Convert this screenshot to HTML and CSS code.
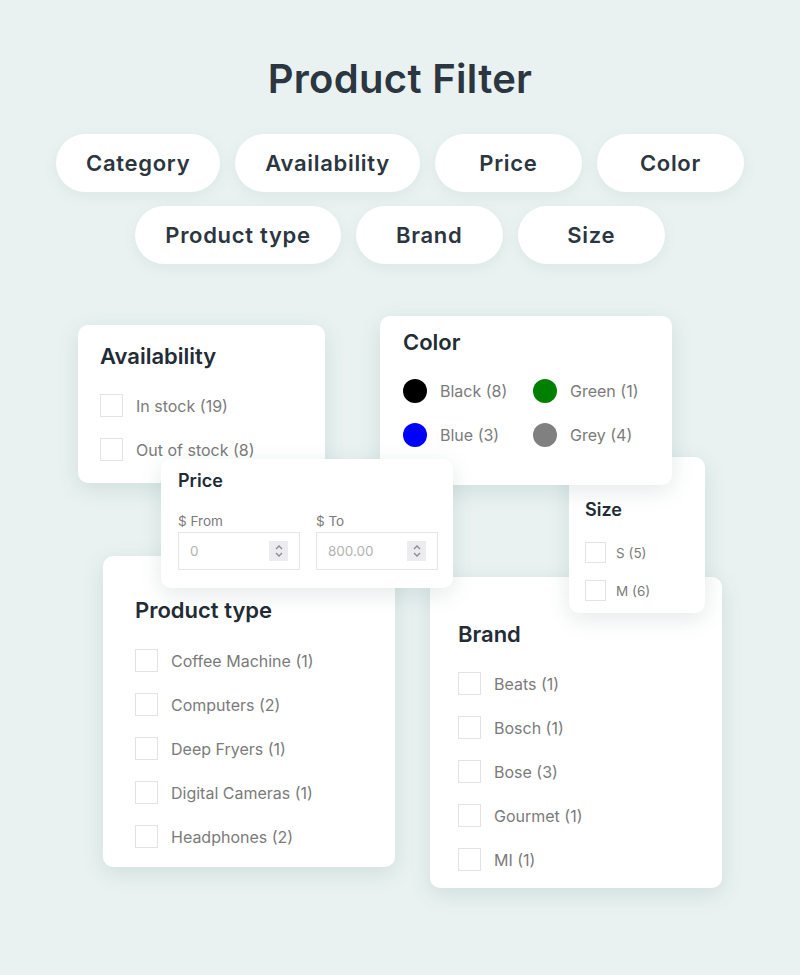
FILE: index.html
```html
<!DOCTYPE html>
<html lang="en">
<head>
    <meta charset="UTF-8">
    <meta name="viewport" content="width=device-width, initial-scale=1.0">
    <title>Product Filter</title>
    <link rel="stylesheet" href="styles.css">
</head>
<body>
    <header class="top">
        <h1>Product Filter</h1>
        <div class="pills">
            <div class="pill-row">
                <span class="pill">Category</span>
                <span class="pill">Availability</span>
                <span class="pill">Price</span>
                <span class="pill">Color</span>
            </div>
            <div class="pill-row">
                <span class="pill">Product type</span>
                <span class="pill">Brand</span>
                <span class="pill">Size</span>
            </div>
        </div>
    </header>

    <div class="canvas">
        <!-- availability -->
        <div class="card card-availability">
            <h2>Availability</h2>
            <label class="check"><span class="box"></span>In stock (19)</label>
            <label class="check"><span class="box"></span>Out of stock (8)</label>
        </div>

        <!-- product type -->
        <div class="card card-type">
            <h2>Product type</h2>
            <label class="check"><span class="box"></span>Coffee Machine (1)</label>
            <label class="check"><span class="box"></span>Computers (2)</label>
            <label class="check"><span class="box"></span>Deep Fryers (1)</label>
            <label class="check"><span class="box"></span>Digital Cameras (1)</label>
            <label class="check"><span class="box"></span>Headphones (2)</label>
        </div>

        <!-- brand -->
        <div class="card card-brand">
            <h2>Brand</h2>
            <label class="check"><span class="box"></span>Beats (1)</label>
            <label class="check"><span class="box"></span>Bosch (1)</label>
            <label class="check"><span class="box"></span>Bose (3)</label>
            <label class="check"><span class="box"></span>Gourmet (1)</label>
            <label class="check"><span class="box"></span>MI (1)</label>
        </div>

        <!-- size -->
        <div class="card card-size">
            <h2>Size</h2>
            <label class="check small"><span class="box"></span>S (5)</label>
            <label class="check small"><span class="box"></span>M (6)</label>
        </div>

        <!-- color -->
        <div class="card card-color">
            <h2>Color</h2>
            <div class="swatches">
                <span class="swatch"><span class="dot black"></span>Black (8)</span>
                <span class="swatch"><span class="dot green"></span>Green (1)</span>
                <span class="swatch"><span class="dot blue"></span>Blue (3)</span>
                <span class="swatch"><span class="dot grey"></span>Grey (4)</span>
            </div>
        </div>

        <!-- price -->
        <div class="card card-price">
            <h2>Price</h2>
            <div class="price-fields">
                <div class="field">
                    <span class="field-label">$ From</span>
                    <div class="field-input">
                        <span>0</span>
                        <span class="spin">
                            <svg width="10" height="14" viewBox="0 0 10 14"><path d="M2 5 L5 2 L8 5 M2 9 L5 12 L8 9" fill="none" stroke="#8a8a92" stroke-width="1.3"/></svg>
                        </span>
                    </div>
                </div>
                <div class="field">
                    <span class="field-label">$ To</span>
                    <div class="field-input">
                        <span>800.00</span>
                        <span class="spin">
                            <svg width="10" height="14" viewBox="0 0 10 14"><path d="M2 5 L5 2 L8 5 M2 9 L5 12 L8 9" fill="none" stroke="#8a8a92" stroke-width="1.3"/></svg>
                        </span>
                    </div>
                </div>
            </div>
        </div>
    </div>
</body>
</html>
```

FILE: styles.css
```css
body {
    font-family: Inter, Roboto, "Liberation Sans", sans-serif;
    background-color: #e9f2f1;
    margin: 0;
    padding: 0;
    color: #2b3640;
}

.top {
    text-align: center;
    padding-top: 55px;
}

h1 {
    font-size: 40px;
    font-weight: 600;
    margin: 0;
    line-height: 48px;
    letter-spacing: 0.3px;
}

.pills {
    display: flex;
    flex-direction: column;
    align-items: center;
    gap: 14px;
    margin-top: 31px;
}

.pill-row {
    display: flex;
    gap: 15px;
}

.pill {
    background-color: #ffffff;
    height: 58px;
    min-width: 147px;
    box-sizing: border-box;
    padding: 0 30px;
    border-radius: 29px;
    display: flex;
    align-items: center;
    justify-content: center;
    font-size: 22px;
    font-weight: 600;
    letter-spacing: 0.7px;
    box-shadow: 0 4px 14px rgba(60, 110, 105, 0.08);
}

/* free canvas of overlapping cards */
.canvas {
    position: relative;
    height: 690px;
    margin-top: 18px;
}

.card {
    position: absolute;
    background-color: #ffffff;
    border-radius: 10px;
    box-shadow: 0 6px 22px rgba(40, 90, 85, 0.13);
    box-sizing: border-box;
    display: flex;
    flex-direction: column;
}

.card h2 {
    font-size: 22px;
    font-weight: 600;
    margin: 0 0 3px;
    line-height: 28px;
    color: #232c35;
}

.check {
    display: flex;
    align-items: center;
    gap: 13px;
    font-size: 16px;
    color: #7b7b7b;
    height: 23px;
    margin-top: 21px;
}

.box {
    width: 23px;
    height: 23px;
    box-sizing: border-box;
    border: 1px solid #e3e3e3;
    flex-shrink: 0;
}

.check.small {
    font-size: 13.5px;
    height: 21px;
    gap: 10px;
    margin-top: 17px;
}

.check.small .box {
    width: 21px;
    height: 21px;
}

.card-availability {
    left: 78px;
    top: 43px;
    width: 247px;
    height: 158px;
    padding: 17px 22px;
}

.card-type {
    left: 103px;
    top: 274px;
    width: 292px;
    height: 311px;
    padding: 40px 32px;
}

.card-type h2 {
    margin-bottom: 4px;
}

.card-brand {
    left: 430px;
    top: 295px;
    width: 292px;
    height: 311px;
    padding: 43px 28px;
}

.card-size {
    left: 569px;
    top: 175px;
    width: 136px;
    height: 156px;
    padding: 41px 16px;
}

.card-size h2 {
    font-size: 18px;
    line-height: 24px;
}

.card-color {
    left: 380px;
    top: 34px;
    width: 292px;
    height: 169px;
    padding: 12px 23px;
}

.card-color h2 {
    margin-bottom: 0;
}

.swatches {
    display: grid;
    grid-template-columns: 130px 1fr;
    row-gap: 20px;
    margin-top: 23px;
}

.swatch {
    display: flex;
    align-items: center;
    gap: 13px;
    font-size: 16px;
    color: #7b7b7b;
}

.dot {
    width: 24px;
    height: 24px;
    border-radius: 50%;
}

.black { background-color: #000000; }
.green { background-color: #008000; }
.blue { background-color: #0000ff; }
.grey { background-color: #808080; }

.card-price {
    left: 161px;
    top: 177px;
    width: 292px;
    height: 129px;
    padding: 10px 17px;
}

.card-price h2 {
    font-size: 18px;
    line-height: 24px;
    margin-bottom: 0;
}

.price-fields {
    display: flex;
    gap: 16px;
    margin-top: 20px;
}

.field {
    display: flex;
    flex-direction: column;
    gap: 3px;
}

.field-label {
    font-size: 13.5px;
    color: #7b7b7b;
    line-height: 16px;
}

.field-input {
    width: 122px;
    height: 38px;
    box-sizing: border-box;
    border: 1px solid #e6e6e6;
    display: flex;
    align-items: center;
    justify-content: space-between;
    padding: 0 11px 0 11px;
    font-size: 13.5px;
    color: #b3b3b3;
}

.spin {
    width: 19px;
    height: 20px;
    background-color: #ececf0;
    display: flex;
    align-items: center;
    justify-content: center;
}
```
